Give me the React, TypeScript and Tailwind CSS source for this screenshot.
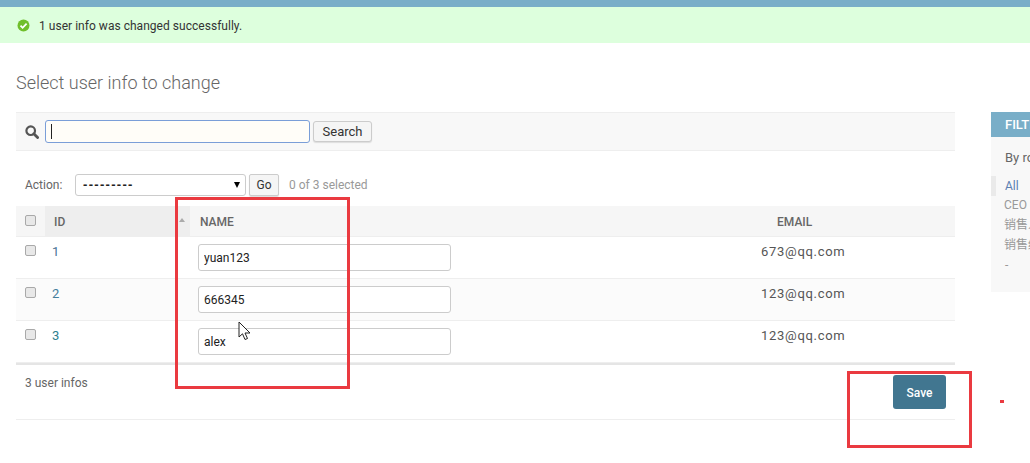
const rows = [
  { id: 1, name: 'yuan123', email: '673@qq.com', idColor: 'text-[#4a7296]' },
  { id: 2, name: '666345', email: '123@qq.com', idColor: 'text-[#447e9b]' },
  { id: 3, name: 'alex', email: '123@qq.com', idColor: 'text-[#2f7f8f]' },
];

function Checkbox() {
  return <span className="block w-[11px] h-[11px] rounded-[2px] border border-[#a9a9a9] bg-[#e8e8e8]" />;
}

export default function App() {
  return (
    <div className="relative w-[1030px] h-[463px] overflow-hidden bg-white text-[13px] text-[#333] font-['Roboto','Noto_Sans_CJK_SC',sans-serif]">
      <div className="h-[7px] bg-[#79aec8]" />
      <div className="h-9 bg-[#dfd] flex items-center pl-[17px] text-xs text-[#333]">
        <svg width="13" height="13" viewBox="0 0 13 13" className="mr-[9px]">
          <circle cx="6.5" cy="6.5" r="6" fill="#70bf2b" />
          <path d="M3.5 6.7 5.6 8.8 9.6 4.6" fill="none" stroke="#fff" strokeWidth="1.8" />
        </svg>
        <span className="pt-[2px] tracking-[0.03px]">1 user info was changed successfully.</span>
      </div>

      <div className="flex pt-[29px]">
        <div className="ml-4 w-[939px] shrink-0">
          <h1 className="text-lg leading-[22px] font-light text-[#666] mb-[18px]">Select user info to change</h1>

          <div className="h-[39px] bg-[#f8f8f8] border-y border-[#eee] flex items-center pl-[9px]">
            <svg width="14" height="14" viewBox="0 0 14 14" className="mr-[6px]">
              <circle cx="5.7" cy="5.7" r="4.3" fill="none" stroke="#555" strokeWidth="2.2" />
              <path d="M8.8 8.8 12.6 12.6" fill="none" stroke="#555" strokeWidth="2.8" strokeLinecap="round" />
            </svg>
            <div className="w-[265px] h-[23px] bg-[#fffdf8] border border-[#7a9ed8] rounded-[3px] flex items-center pl-[5px]">
              <span className="w-px h-[15px] bg-[#222]" />
            </div>
            <button className="ml-[3px] w-[59px] h-[21px] bg-[#f5f5f5] border border-[#ccc] rounded-[3px] text-[13px] text-[#333] shadow-[0_1px_1px_#ddd]">
              Search
            </button>
          </div>

          <div className="h-[55px] flex items-center pl-[9px] pt-[12px] text-xs text-[#666]">
            <span className="w-[50px]">Action:</span>
            <div className="w-[171px] h-[22px] border border-[#ccc] rounded-[3px] flex items-center justify-between pl-[7px] pr-[5px] text-[#222]">
              <span className="text-[13px] font-bold tracking-[1.3px] font-['Liberation_Sans',sans-serif]">---------</span>
              <span className="w-0 h-0 border-x-[3px] border-x-transparent border-t-[6px] border-t-black" />
            </div>
            <button className="ml-[3px] w-[30px] h-[22px] bg-[#f5f5f5] border border-[#ccc] rounded-[2px] text-xs text-[#333] shadow-[0_1px_1px_#ddd]">
              Go
            </button>
            <span className="ml-[10px] text-[#999]">0 of 3 selected</span>
          </div>

          <table className="w-full table-fixed border-collapse">
            <thead>
              <tr className="h-[30px] bg-[#f6f6f6] border-b border-[#eee] text-xs font-medium text-[#666]">
                <th className="w-[29px] pl-[9px]">
                  <Checkbox />
                </th>
                <th className="w-[145px] bg-[#eee] pl-[9px] pt-[2px] text-left font-medium relative">
                  ID
                  <span className="absolute right-[5px] top-[12px] w-0 h-0 border-x-[3px] border-x-transparent border-b-[4px] border-b-[#aaa]" />
                </th>
                <th className="w-[571px] pl-[10px] pt-[2px] text-left font-medium">NAME</th>
                <th className="pl-[16px] pt-[2px] text-left font-medium">EMAIL</th>
              </tr>
            </thead>
            <tbody>
              {rows.map((row, i) => (
                <tr key={row.id} className={`h-[42px] align-top border-b border-[#eee] ${i === 1 ? 'bg-[#fbfbfb]' : 'bg-white'}`}>
                  <td className="pl-[9px] pt-[8px]">
                    <Checkbox />
                  </td>
                  <td className={`pl-[7px] pt-[5px] ${row.idColor}`}>{row.id}</td>
                  <td className="pl-2 pt-[7px]">
                    <input
                      readOnly
                      value={row.name}
                      className="block w-[253px] h-[27px] bg-white border border-[#ccc] rounded-[3px] pl-[5px] pt-[2px] text-xs text-[#222]"
                    />
                  </td>
                  <td className="pt-[7px] text-[13px] leading-4 tracking-[0.7px] text-[#555]">{row.email}</td>
                </tr>
              ))}
            </tbody>
          </table>

          <div className="h-[57px] border-t-2 border-[#e5e5e5] border-b border-b-[#eee] flex items-start justify-between pl-[9px] pr-[9px] text-xs text-[#666]">
            <span className="pt-[10px]">3 user infos</span>
            <button className="mt-[10px] w-[53px] h-[34px] pt-[2px] bg-[#417690] rounded-[3px] text-xs font-medium text-white">Save</button>
          </div>
        </div>

        <div className="ml-9 mt-[40px] w-[200px] h-[180px] shrink-0 bg-[#f8f8f8] text-xs">
          <div className="h-[25px] bg-[#79aec8] flex items-center pl-[14px] text-[13px] font-medium text-white">FILTER</div>
          <div className="pl-[14px] pt-[12px] text-[13px] text-[#666]">By role</div>
          <div className="pt-[10px] text-[#999] leading-5">
            <div className="border-l-[5px] border-[#eaeaea] pl-[9px] text-[#5b80b2]">All</div>
            <div className="pl-[13px] -mt-px">CEO</div>
            <div className="pl-[13px]">销售人员</div>
            <div className="pl-[13px]">销售经理</div>
            <div className="pl-[14px]">-</div>
          </div>
        </div>
      </div>

      {/* annotations drawn over the screenshot */}
      <div className="absolute left-[175px] top-[197px] w-[175px] h-[192px] border-[3px] border-[#ea3a40]" />
      <div className="absolute left-[847px] top-[371px] w-[125px] h-[77px] border-[3px] border-[#ea3a40]" />
      <div className="absolute left-[1000px] top-[400px] w-[4px] h-[3px] bg-[#ea3a40]" />
      <svg className="absolute left-[238px] top-[321px]" width="13" height="20" viewBox="0 0 13 20">
        <path d="M1 1V16L4.5 12.8 7 18.5 9.5 17.5 7 12H12Z" fill="#fff" stroke="#222" strokeWidth="1" />
      </svg>
    </div>
  );
}
